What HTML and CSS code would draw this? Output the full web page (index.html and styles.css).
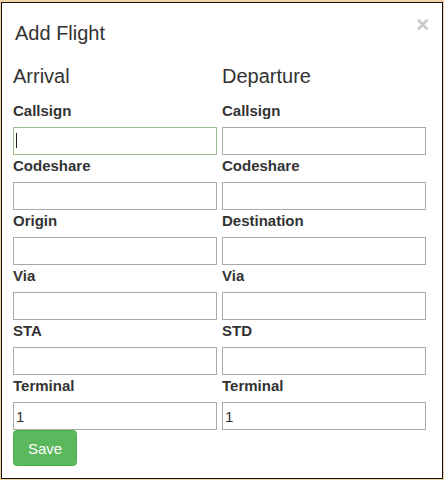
FILE: index.html
```html
<!DOCTYPE html>
<html>
<head>
<meta charset="utf-8">
<link rel="stylesheet" href="styles.css">
</head>
<body>
<div class="modal">
  <div class="modal-header">
    <h4 class="modal-title">Add Flight</h4>
    <span class="close">&times;</span>
  </div>
  <div class="modal-body">
    <div class="cols">
      <div class="col">
        <h3 class="col-title">Arrival</h3>
        <div class="field"><label>Callsign</label><input class="focused" type="text"></div>
        <div class="field"><label>Codeshare</label><input type="text"></div>
        <div class="field"><label>Origin</label><input type="text"></div>
        <div class="field"><label>Via</label><input type="text"></div>
        <div class="field"><label>STA</label><input type="text"></div>
        <div class="field"><label>Terminal</label><input type="text" value="1"></div>
      </div>
      <div class="col">
        <h3 class="col-title">Departure</h3>
        <div class="field"><label>Callsign</label><input type="text"></div>
        <div class="field"><label>Codeshare</label><input type="text"></div>
        <div class="field"><label>Destination</label><input type="text"></div>
        <div class="field"><label>Via</label><input type="text"></div>
        <div class="field"><label>STD</label><input type="text"></div>
        <div class="field"><label>Terminal</label><input type="text" value="1"></div>
      </div>
    </div>
    <button class="save">Save</button>
  </div>
</div>
</body>
</html>
```
FILE: styles.css
```css
html, body {
  margin: 0;
  height: 480px;
  overflow: hidden;
}
body {
  background: #f3d1a3;
  font-family: "Liberation Sans", Arial, sans-serif;
  color: #333;
}
.modal {
  margin: 2px 1px 0 1px;
  width: 440px;
  height: 475px;
  border: 1px solid #111;
  background: #fff;
  display: flex;
  flex-direction: column;
}
.modal-header {
  display: flex;
  justify-content: space-between;
  align-items: flex-start;
  padding: 19px 13px 0 13px;
}
.modal-title {
  margin: 0;
  font-size: 20px;
  line-height: 22px;
  font-weight: normal;
}
.close {
  font-size: 22px;
  font-weight: bold;
  line-height: 21px;
  color: #c8c8c8;
  margin-top: -8px;
  margin-right: 0;
}
.modal-body {
  padding: 21px 11px 0 11px;
}
.cols {
  display: grid;
  grid-template-columns: 204px 204px;
  column-gap: 5px;
}
.col-title {
  margin: 0 0 15px 0;
  font-size: 20px;
  line-height: 22px;
  font-weight: normal;
}
.field {
  display: flex;
  flex-direction: column;
  margin-bottom: 2px;
}
.col .field:last-child {
  margin-bottom: 0;
}
.field label {
  font-size: 15px;
  line-height: 17px;
  font-weight: bold;
  margin-bottom: 8px;
}
.field input {
  box-sizing: border-box;
  height: 28px;
  width: 204px;
  margin: 0;
  border: 1px solid #aaa;
  border-radius: 0;
  padding: 0 2px;
  font-family: "Liberation Sans", Arial, sans-serif;
  font-size: 15px;
  color: #333;
  background: #fff;
  outline: none;
}
.field input.focused {
  border-color: #9fbe90;
  background: #fff linear-gradient(#222, #222) no-repeat 2px 5px / 1px 15px;
}
.save {
  display: block;
  height: 36px;
  padding: 0 14px;
  background: #5cb85c;
  border: 1px solid #4cae4c;
  border-radius: 4px;
  color: #fff;
  font-family: "Liberation Sans", Arial, sans-serif;
  font-size: 15px;
}
```
